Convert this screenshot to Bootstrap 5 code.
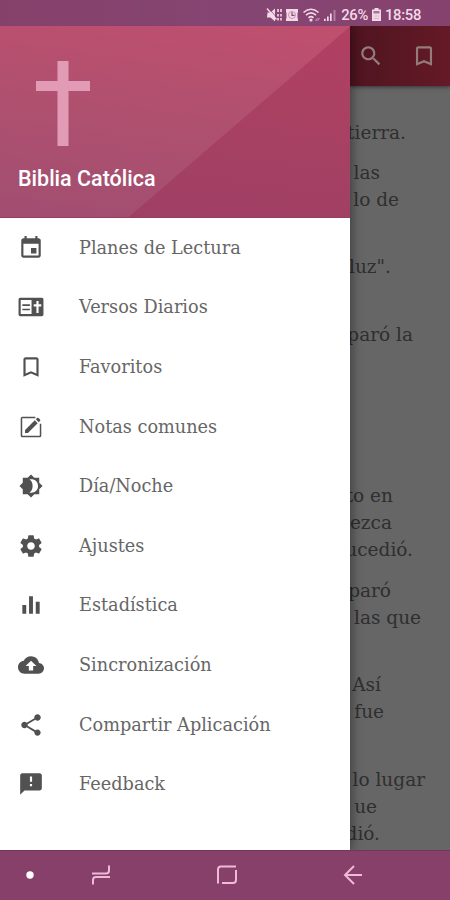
<!DOCTYPE html>
<html lang="es">
<head>
<meta charset="utf-8">
<meta name="viewport" content="width=device-width, initial-scale=1">
<title>Biblia Católica</title>
<link href="https://cdn.jsdelivr.net/npm/bootstrap@5.3.0/dist/css/bootstrap.min.css" rel="stylesheet">
<style>
html,body{height:100%;margin:0;overflow:hidden}
body{font-family:Roboto,sans-serif}
.screen{width:450px;height:900px;overflow:hidden}
.status{height:26px;background:linear-gradient(90deg,#86416a,#854573 55%,#86426e);color:#f3d9e8;padding:3px 29px 0 0;font-size:14.8px;font-weight:500;line-height:22px}
.status span{white-space:nowrap}
.status .pct{letter-spacing:-.35px;margin-left:3px}
.status .clock{letter-spacing:-.3px;margin-left:4px}
.drawer{width:350px;background:#fff;z-index:2;box-shadow:2px 0 10px rgba(0,0,0,.4)}
.hero{height:192px;border-bottom:1px solid #983b60;padding:35px 18px 0;background:linear-gradient(to bottom right,transparent 50%,rgba(150,35,75,.34) 50.3%) right top/222px 191px no-repeat,linear-gradient(188deg,#c04f6f,#b1506f 45%,#a14e71)}
.hero svg{margin-left:18px}
.hero h1{font-size:21.5px;font-weight:500;color:#fff;margin:19px 0 0;line-height:28px;white-space:nowrap}
.entry{height:59.6px;padding-left:18px}
.entry svg{width:26px;height:26px;fill:#515151;flex:none}
.entry span{font:17.7px/24px "DejaVu Serif",serif;color:#666;margin-left:35px;white-space:nowrap}
.reader{width:100px;background:#666}
.bar{height:60px;background:linear-gradient(90deg,#4f1420,#5b1824 60%,#661926);box-shadow:0 1px 4px rgba(0,0,0,.5);padding-left:8px;gap:25px}
.verses{padding-top:32.6px;font:18.5px/27px "DejaVu Serif",serif;color:#2f2f2f}
.verses p{margin:0 0 13.4px}
.verses .skip{padding-top:27px}
.verses .after{margin-bottom:134.6px}
.ln{display:flex;justify-content:flex-end;height:27px;white-space:nowrap}
.softkeys{height:50px;background:#874069;border-top:1px solid #6e3755;z-index:3}
.softkeys svg{display:block}
</style>
</head>
<body>
<div class="screen d-flex flex-column">
  <header class="status d-flex align-items-center justify-content-end flex-shrink-0">
    <svg width="72" height="18" viewBox="266 5 72 18" fill="#f3d9e8">
      <path d="M267.500 11.500h3l4.500-4v13l-4.500-4h-3.500z"/><path d="M267 7.500l9.500 11" stroke="#f3d9e8" stroke-width="1.400"/><path d="M268.500 7l9.500 11" stroke="#854573" stroke-width=".7"/>
      <path d="M278 8v3M278 13v2.500M278 17v2.500M281 8v3M281 13v2.500M281 17v2.500" stroke="#f3d9e8" stroke-width="1.600"/>
      <path d="M286 8h12v3l-.5 1v5l.5 1v2h-12v-2l.5-1v-5l-.5-1z"/><circle cx="292" cy="14" r="3.500" fill="none" stroke="#b285a2" stroke-width=".8"/><path d="M292 11.300v3h2.500" fill="none" stroke="#854573" stroke-width="1.200"/>
      <g fill="none" stroke="#f3d9e8" stroke-width="1.600"><path d="M303.500 11.500q7.500-6.500 15 0M306 14.200q5-4.600 10 0M308.500 16.800q2.500-2.300 5 0"/></g><circle cx="311" cy="19" r="1.600"/><path d="M315 20l1.500-3 1.500 3zM317 17h3l-1.500 3z" opacity=".4"/>
      <path d="M324 17.800h1.700v2.200H324zM327 15.500h1.700V20H327zM330 12.500h1.700V20H330z"/><path d="M333.500 9h2v11h-2z" opacity=".4"/>
    </svg>
    <span class="pct">26%</span>
    <svg class="ms-1" width="9" height="14" viewBox="0 0 9 14"><path d="M2.500 0h4v1.500H9V13H0V1.500h2.500z" fill="#f3d9e8"/><path d="M1.500 3h6v2.500h-6z" fill="#a77896"/><path d="M2 8h5M2 10.500h5" stroke="#d8b2c8"/></svg>
    <span class="clock">18:58</span>
  </header>

  <main class="d-flex flex-grow-1 overflow-hidden">
    <nav class="drawer flex-shrink-0">
      <div class="hero">
        <svg class="d-block" width="54" height="85" viewBox="0 0 54 85"><path d="M21.500 0h11v20H54v10H32.500v55h-11V30H0V20h21.500z" fill="#e29bb5"/></svg>
        <h1>Biblia Católica</h1>
      </div>
      <div class="menu d-flex flex-column">
        <div class="entry d-flex align-items-center"><svg viewBox="0 0 24 24"><path d="M17 12h-5v5h5v-5zM16 1v2H8V1H6v2H5c-1.110 0-1.990.9-1.990 2L3 19c0 1.100.89 2 2 2h14c1.100 0 2-.9 2-2V5c0-1.100-.9-2-2-2h-1V1h-2zm3 18H5V8h14v11z"/></svg><span>Planes de Lectura</span></div>
        <div class="entry d-flex align-items-center"><svg viewBox="0 0 24 24"><path fill-rule="evenodd" d="M2 3.500h20q1.500 0 1.500 1.500v14q0 1.500-1.500 1.500H2q-1.500 0-1.500-1.500V5Q.5 3.500 2 3.500zM2.500 5.500v13h10v-13zM17 6.500v3h-2.500v2H17v6h2v-6h2.500v-2H19v-3z"/><path d="M4 9.500h7v1.500H4zM4 13.500h7V15H4z"/></svg><span>Versos Diarios</span></div>
        <div class="entry d-flex align-items-center"><svg viewBox="0 0 24 24"><path d="M17 3H7c-1.100 0-1.990.9-1.990 2L5 21l7-3 7 3V5c0-1.100-.9-2-2-2zm0 15l-5-2.180L7 18V5h10v13z"/></svg><span>Favoritos</span></div>
        <div class="entry d-flex align-items-center"><svg viewBox="0 0 24 24"><path d="M16 3.200H4Q3.200 3.200 3.200 4v16q0 .8.8.8h16q.8 0 .8-.8V9" fill="none" stroke="#515151" stroke-width="1.400"/><path d="M6.500 14.800V17.500h2.700l9-9-2.700-2.700zM16.400 4.900l2.700 2.700 1.300-1.300q.6-.6 0-1.200l-1.500-1.500q-.6-.6-1.200 0z"/></svg><span>Notas comunes</span></div>
        <div class="entry d-flex align-items-center"><svg viewBox="0 0 24 24"><path fill-rule="evenodd" d="M19.600 15.100L22.700 12 19.600 8.900V4.400h-4.500L12 1.300 8.900 4.400H4.400v4.500L1.300 12l3.100 3.100v4.500h4.500l3.100 3.100 3.100-3.100h4.500zM10.500 18c2-1.100 3-3.300 3-6s-1-4.900-3-6c4.200-1 8 1.700 8 6s-3.800 7-8 6z"/></svg><span>Día/Noche</span></div>
        <div class="entry d-flex align-items-center"><svg viewBox="0 0 24 24"><path d="M19.430 12.980c.04-.32.07-.64.07-.98s-.03-.66-.07-.98l2.110-1.650c.19-.15.24-.42.12-.64l-2-3.460c-.12-.22-.39-.3-.61-.22l-2.490 1c-.52-.4-1.080-.73-1.690-.98l-.38-2.650C14.460 2.180 14.250 2 14 2h-4c-.25 0-.46.18-.49.42l-.38 2.650c-.61.25-1.170.59-1.690.98l-2.490-1c-.23-.09-.49 0-.61.22l-2 3.460c-.13.22-.07.49.12.64l2.110 1.650c-.04.32-.07.65-.07.98s.03.66.07.98l-2.110 1.650c-.19.15-.24.42-.12.64l2 3.460c.12.22.39.3.61.22l2.490-1c.52.4 1.080.73 1.690.98l.38 2.650c.03.24.24.42.49.42h4c.25 0 .46-.18.49-.42l.38-2.650c.61-.25 1.170-.59 1.690-.98l2.490 1c.23.09.49 0 .61-.22l2-3.460c.12-.22.07-.49-.12-.64l-2.110-1.650zM12 15.500c-1.930 0-3.500-1.570-3.500-3.500s1.570-3.500 3.500-3.500 3.500 1.570 3.500 3.500-1.570 3.500-3.500 3.500z"/></svg><span>Ajustes</span></div>
        <div class="entry d-flex align-items-center"><svg viewBox="0 0 24 24"><path d="M10.200 20h3.600V4h-3.600v16zM4 20h3.600v-8H4v8zM16.400 9v11H20V9h-3.600z"/></svg><span>Estadística</span></div>
        <div class="entry d-flex align-items-center"><svg viewBox="0 0 24 24"><path d="M19.350 10.040C18.670 6.590 15.640 4 12 4 9.110 4 6.600 5.640 5.350 8.040 2.340 8.360 0 10.910 0 14c0 3.310 2.690 6 6 6h13c2.760 0 5-2.240 5-5 0-2.640-2.050-4.780-4.650-4.960zM14 13v4h-4v-4H7l5-5 5 5h-3z"/></svg><span>Sincronización</span></div>
        <div class="entry d-flex align-items-center"><svg viewBox="0 0 24 24"><path d="M18 16.080c-.76 0-1.440.3-1.960.77L8.910 12.700c.05-.23.09-.46.09-.7s-.04-.47-.09-.7l7.050-4.110c.54.5 1.250.81 2.040.81 1.660 0 3-1.340 3-3s-1.340-3-3-3-3 1.340-3 3c0 .24.04.47.09.7L8.040 9.810C7.500 9.310 6.790 9 6 9c-1.660 0-3 1.340-3 3s1.340 3 3 3c.79 0 1.500-.31 2.040-.81l7.120 4.160c-.05.21-.08.43-.08.65 0 1.610 1.310 2.920 2.920 2.920s2.920-1.310 2.920-2.920-1.310-2.920-2.920-2.920z"/></svg><span>Compartir Aplicación</span></div>
        <div class="entry d-flex align-items-center"><svg viewBox="0 0 24 24"><path d="M20 2H4c-1.100 0-1.990.9-1.990 2L2 22l4-4h14c1.100 0 2-.9 2-2V4c0-1.100-.9-2-2-2zm-7 12h-2v-2h2v2zm0-4h-2V5h2v5z"/></svg><span>Feedback</span></div>
      </div>
    </nav>

    <section class="reader flex-shrink-0 overflow-hidden">
      <div class="bar d-flex align-items-center">
        <svg width="26" height="26" viewBox="0 0 24 24" fill="#957c7c"><path d="M15.500 14h-.79l-.28-.27C15.410 12.590 16 11.110 16 9.500 16 5.910 13.090 3 9.500 3S3 5.910 3 9.500 5.910 16 9.500 16c1.610 0 3.090-.59 4.230-1.570l.27.28v.79l5 4.990L20.490 19l-4.990-5zm-6 0C7.010 14 5 11.990 5 9.500S7.010 5 9.500 5 14 7.010 14 9.500 11.990 14 9.500 14z"/></svg>
        <svg width="30" height="26" viewBox="-2 0 28 24" fill="#957c7c"><path d="M17.500 3h-11C5.400 3 4.500 3.900 4.500 5v16l7.500-3 7.500 3V5c0-1.100-.9-2-2-2zm0 15L12 15.820 6.500 18V5h11z"/></svg>
      </div>
      <div class="verses">
        <p><span class="ln" style="padding-right:44px">tierra.</span></p>
        <p><span class="ln" style="padding-right:70px">las</span><span class="ln" style="padding-right:51px">lo de</span></p>
        <p class="skip"><span class="ln" style="padding-right:59px">luz".</span></p>
        <p class="skip after"><span class="ln" style="padding-right:37px">paró la</span></p>
        <p><span class="ln" style="padding-right:57px">to en</span><span class="ln" style="padding-right:58px">ezca</span><span class="ln" style="padding-right:37px">ucedió.</span></p>
        <p><span class="ln" style="padding-right:59px">paró</span><span class="ln" style="padding-right:29px">las que</span></p>
        <p class="skip"><span class="ln" style="padding-right:69px">Así</span><span class="ln" style="padding-right:66px">fue</span></p>
        <p class="skip"><span class="ln" style="padding-right:25px">lo lugar</span><span class="ln" style="padding-right:73px">ue</span><span class="ln" style="padding-right:70px">dió.</span></p>
      </div>
    </section>
  </main>

  <footer class="softkeys flex-shrink-0">
    <svg width="450" height="49" viewBox="0 851 450 49" fill="none" stroke="#efb9d8" stroke-width="2">
      <circle cx="30" cy="875" r="3.700" fill="#fff" stroke="none"/>
      <path d="M92 873.500h14q3 0 3-3v-5M110 877h-14q-3 0-3 3v4.500"/>
      <path d="M236 866.500h-15q-3 0-3 3v14M222 883h11q3 0 3-3v-10"/>
      <path d="M362 875h-16M354 866l-9 9 9 9"/>
    </svg>
  </footer>
</div>
<script src="https://cdn.jsdelivr.net/npm/bootstrap@5.3.0/dist/js/bootstrap.bundle.min.js"></script>
</body>
</html>
